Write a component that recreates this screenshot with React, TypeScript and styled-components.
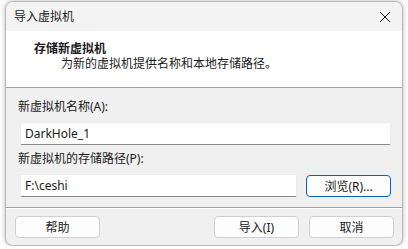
import React from "react";
import styled, { createGlobalStyle } from "styled-components";

const Global = createGlobalStyle`
  html, body { margin: 0; padding: 0; background: #ffffff; }
  body {
    font-family: "Segoe UI", "Noto Sans", "Noto Sans CJK SC", sans-serif;
    font-size: 12px;
    color: #1a1a1a;
  }
  #root { padding: 1px 0 0 5px; }
`;

const Window = styled.div`
  width: 398px;
  height: 245px;
  box-sizing: border-box;
  border: 1px solid #b9b9b9;
  border-radius: 8px;
  overflow: hidden;
  background: #f0f0f0;
  box-shadow: 0 0 5px rgba(0, 0, 0, 0.28);
  display: flex;
  flex-direction: column;
`;

const TitleBar = styled.div`
  height: 29px;
  background: #f3f3f3;
  display: flex;
  align-items: center;
  justify-content: space-between;
  padding: 0 9px 0 8px;
  flex-shrink: 0;
`;

const Title = styled.span`
  font-size: 12px;
  color: #1b1b1b;
  line-height: 16px;
`;

const CloseBtn = styled.div`
  width: 16px;
  height: 16px;
  display: flex;
  align-items: center;
  justify-content: center;
`;

const Header = styled.div`
  height: 57px;
  background: #ffffff;
  border-bottom: 1px solid #a0a0a0;
  box-sizing: border-box;
  padding: 10px 0 0 28px;
  display: flex;
  flex-direction: column;
  gap: 0;
`;

const HeaderTitle = styled.div`
  font-weight: bold;
  font-size: 12px;
  line-height: 16px;
`;

const HeaderSub = styled.div`
  font-size: 12px;
  line-height: 16px;
  margin-left: 27px;
  margin-top: -1px;
`;

const Body = styled.div`
  padding: 11px 11px 0 12px;
  display: flex;
  flex-direction: column;
  height: 120px;
  box-sizing: border-box;
  border-bottom: 1px solid #a0a0a0;
  box-shadow: 0 1px 0 #ffffff;
`;

const Label = styled.div`
  font-size: 12px;
  line-height: 16px;
  margin-bottom: 7px;
`;

const Row = styled.div`
  display: flex;
  align-items: center;
  gap: 9px;
  margin-left: 2px;
`;

const Input = styled.div<{ $w?: number }>`
  ${(p) => (p.$w ? `width: ${p.$w}px;` : "flex: 1;")}
  height: 23px;
  box-sizing: border-box;
  background: #ffffff;
  border: 1px solid #ececec;
  border-bottom: 1px solid #8a8a8a;
  border-radius: 2px;
  padding: 0 4px;
  display: flex;
  align-items: center;
  font-size: 12px;
  color: #1a1a1a;
`;

const Spacer = styled.div<{ $h: number }>`
  height: ${(p) => p.$h}px;
  flex-shrink: 0;
`;

const Button = styled.div<{ $w: number; $primary?: boolean }>`
  width: ${(p) => p.$w}px;
  height: 22px;
  box-sizing: border-box;
  background: #fdfdfd;
  border: 1px solid ${(p) => (p.$primary ? "#0067c0" : "#d0d0d0")};
  border-radius: 4px;
  display: flex;
  align-items: center;
  justify-content: center;
  font-size: 12px;
  color: #1a1a1a;
`;

const Footer = styled.div`
  flex: 1;
  display: flex;
  align-items: center;
  padding: 0 8px 0 9px;
  gap: 10px;
`;

const Grow = styled.div`
  flex: 1;
`;

export default function App() {
  return (
    <>
      <Global />
      <Window>
        <TitleBar>
          <Title>导入虚拟机</Title>
          <CloseBtn>
            <svg width="12" height="12" viewBox="0 0 12 12">
              <path d="M1 1 L11 11 M11 1 L1 11" stroke="#1a1a1a" strokeWidth="1" fill="none" />
            </svg>
          </CloseBtn>
        </TitleBar>
        <Header>
          <HeaderTitle>存储新虚拟机</HeaderTitle>
          <HeaderSub>为新的虚拟机提供名称和本地存储路径。</HeaderSub>
        </Header>
        <Body>
          <Label>新虚拟机名称(A):</Label>
          <Row>
            <Input>DarkHole_1</Input>
          </Row>
          <Spacer $h={6} />
          <Label>新虚拟机的存储路径(P):</Label>
          <Row>
            <Input $w={278}>F:\ceshi</Input>
            <Button $w={85} $primary>
              浏览(R)...
            </Button>
          </Row>
        </Body>
        <Footer>
          <Button $w={85}>帮助</Button>
          <Grow />
          <Button $w={85}>导入(I)</Button>
          <Button $w={85}>取消</Button>
        </Footer>
      </Window>
    </>
  );
}
